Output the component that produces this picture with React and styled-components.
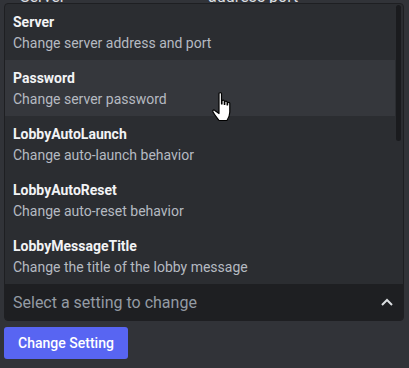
import React from 'react';
import styled, { createGlobalStyle } from 'styled-components';

const GlobalStyle = createGlobalStyle`
  html, body {
    margin: 0;
    padding: 0;
    background: #313338;
    font-family: Roboto, 'Noto Sans', sans-serif;
  }
`;

const Page = styled.div`
  position: relative;
  width: 409px;
  height: 368px;
  overflow: hidden;
  background: #313338;
`;

const BehindRow = styled.div`
  height: 3px;
  overflow: hidden;
  display: flex;
  padding-left: 20px;
  gap: 143px;
  color: #dbdee1;
  font-size: 16px;
  line-height: 20px;

  span {
    margin-top: -13px;
  }
`;

const Panel = styled.div`
  margin: 0 5px 0 4px;
  border: 1px solid #1e1f22;
  border-radius: 4px;
  background: #2b2d31;
  overflow: hidden;
`;

const ListArea = styled.div`
  display: flex;
`;

const OptionList = styled.div`
  flex: 1;
  display: flex;
  flex-direction: column;
`;

const Option = styled.div`
  height: 56px;
  box-sizing: border-box;
  padding: 8px 8px 0;
  background: ${p => (p.$hover ? '#35373c' : 'transparent')};
  cursor: pointer;
`;

const OptionTitle = styled.div`
  color: #f2f3f5;
  font-size: 14px;
  font-weight: 700;
  line-height: 20px;
`;

const OptionDesc = styled.div`
  margin-top: 1px;
  color: #b5bac1;
  font-size: 14px;
  line-height: 20px;
`;

const ScrollTrack = styled.div`
  width: 8px;
  padding: 1px 2px 0 1px;
  box-sizing: border-box;
`;

const ScrollThumb = styled.div`
  height: 136px;
  border-radius: 4px;
  background: #1a1b1e;
`;

const Trigger = styled.div`
  height: 36px;
  display: flex;
  align-items: center;
  justify-content: space-between;
  padding: 0 10px 0 8px;
  background: #1e1f22;
  color: #949ba4;
  font-size: 16px;
`;

const Button = styled.button`
  margin: 6px 0 0 4px;
  width: 124px;
  height: 32px;
  border: none;
  border-radius: 3px;
  background: #5865f2;
  color: #ffffff;
  font-family: Roboto, 'Noto Sans', sans-serif;
  font-size: 14px;
  font-weight: 500;
  cursor: pointer;
`;

const Cursor = styled.svg`
  position: absolute;
  left: 211px;
  top: 91px;
`;

const options = [
  { name: 'Server', desc: 'Change server address and port' },
  { name: 'Password', desc: 'Change server password', hover: true },
  { name: 'LobbyAutoLaunch', desc: 'Change auto-launch behavior' },
  { name: 'LobbyAutoReset', desc: 'Change auto-reset behavior' },
  { name: 'LobbyMessageTitle', desc: 'Change the title of the lobby message' },
];

function Chevron() {
  return (
    <svg width="12" height="8" viewBox="0 0 12 8">
      <path d="M1 7 L6 2 L11 7" fill="none" stroke="#dbdee1" strokeWidth="2" />
    </svg>
  );
}

function HandCursor() {
  return (
    <Cursor width="26" height="32" viewBox="0 0 26 32">
      <path
        d="M8 2.5 C8 1.2 10.5 1.2 10.5 2.5 L10.5 13 L11 13 L11 10 C11 8.8 13.3 8.8 13.3 10 L13.3 13.5 L13.8 13.5 L13.8 11 C13.8 9.8 16.1 9.8 16.1 11 L16.1 14 L16.6 14 L16.6 12.3 C16.6 11.1 18.8 11.1 18.8 12.3 L18.8 21 C18.8 25 17 28 16 29.5 L8 29.5 C6.5 27.5 4 24.5 2 21 C1.2 19.6 2.6 18.4 3.8 19.4 L8 22.5 Z"
        fill="#ffffff"
        stroke="#000000"
        strokeWidth="1.2"
        strokeLinejoin="round"
      />
    </Cursor>
  );
}

export default function App() {
  return (
    <Page>
      <GlobalStyle />
      <BehindRow>
        <span>Server</span>
        <span>address port</span>
      </BehindRow>
      <Panel>
        <ListArea>
          <OptionList>
            {options.map(o => (
              <Option key={o.name} $hover={o.hover}>
                <OptionTitle>{o.name}</OptionTitle>
                <OptionDesc>{o.desc}</OptionDesc>
              </Option>
            ))}
          </OptionList>
          <ScrollTrack>
            <ScrollThumb />
          </ScrollTrack>
        </ListArea>
        <Trigger>
          <span>Select a setting to change</span>
          <Chevron />
        </Trigger>
      </Panel>
      <Button>Change Setting</Button>
      <HandCursor />
    </Page>
  );
}
